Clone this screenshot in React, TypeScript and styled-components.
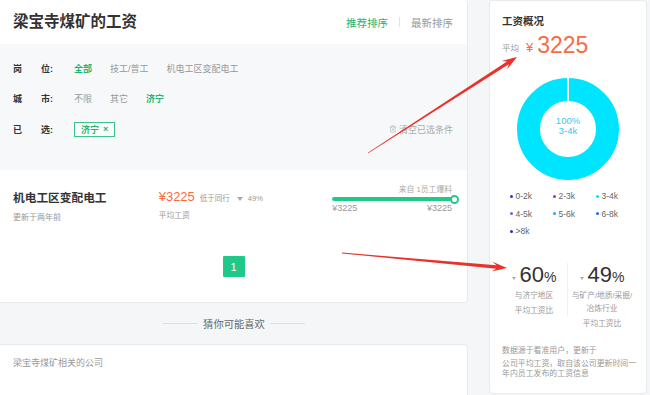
import React from "react";
import styled, { createGlobalStyle } from "styled-components";
import { Trash2 } from "lucide-react";

const GREEN = "#22b573";
const GREEN_BG = "#20c98a";
const ORANGE = "#fb6a3f";

const GlobalStyle = createGlobalStyle`
  html, body { margin: 0; padding: 0; background: #f5f6f8; }
  body { font-family: "Liberation Sans", "Noto Sans CJK SC", sans-serif; color: #333; }
  * { box-sizing: border-box; }
`;

const Page = styled.div`
  position: relative;
  width: 650px;
  height: 395px;
  overflow: hidden;
  display: flex;
  align-items: flex-start;
  gap: 21px;
`;

const Main = styled.div`
  width: 468px;
  flex: none;
  display: flex;
  flex-direction: column;
`;

const Card = styled.section`
  background: #fff;
  border: 1px solid #e8eaed;
  border-left: none;
  border-top: none;
  border-radius: 0 4px 4px 0;
`;

const Header = styled.header`
  height: 44px;
  display: flex;
  align-items: center;
  justify-content: space-between;
  padding: 0 14px 0 13px;
`;

const Title = styled.h1`
  margin: 0;
  font-size: 15.5px;
  font-weight: 700;
  color: #333;
  line-height: 20px;
`;

const Sorts = styled.nav`
  display: flex;
  align-items: center;
  gap: 11px;
  font-size: 10.5px;
`;

const SortLink = styled.span<{ $active?: boolean }>`
  color: ${(p) => (p.$active ? GREEN : "#999")};
`;

const Sep = styled.i`
  width: 1px;
  height: 10px;
  background: #e2e2e2;
`;

const Filter = styled.div`
  background: #f7f8fa;
  height: 126px;
  padding: 9px 14px 0 13px;
`;

const FilterRow = styled.div`
  display: flex;
  align-items: center;
  height: 30.5px;
  font-size: 9px;
`;

const Label = styled.div`
  width: 40px;
  margin-right: 21px;
  display: flex;
  justify-content: space-between;
  font-weight: 700;
  color: #333;
`;

const Options = styled.div`
  display: flex;
  gap: 18px;
`;

const Option = styled.span<{ $active?: boolean }>`
  color: ${(p) => (p.$active ? GREEN : "#999")};
  font-weight: ${(p) => (p.$active ? 700 : 400)};
`;

const Tag = styled.span`
  display: inline-flex;
  align-items: center;
  gap: 4px;
  height: 15px;
  padding: 0 6px;
  border: 1px solid #3cc48d;
  background: #fff;
  color: ${GREEN};
  font-weight: 700;
  font-size: 9px;
`;

const Clear = styled.span`
  margin-left: auto;
  display: flex;
  align-items: center;
  gap: 2px;
  color: #aaa;
  font-size: 9px;
`;

const JobRow = styled.div`
  display: flex;
  height: 86px;
  padding: 15px 8px 0 13px;
`;

const JobMain = styled.div`
  width: 146px;
  padding-top: 6px;
`;

const JobTitle = styled.div`
  font-size: 11.7px;
  line-height: 14px;
  font-weight: 700;
  color: #333;
`;

const Muted = styled.div<{ $size?: number; $gap?: number }>`
  margin-top: ${(p) => p.$gap ?? 0}px;
  font-size: ${(p) => p.$size ?? 8}px;
  line-height: 10px;
  color: #999;
`;

const SalaryCol = styled.div`
  width: 174px;
  padding-top: 5px;
`;

const PriceLine = styled.div`
  display: flex;
  align-items: baseline;
  line-height: 14px;
`;

const Price = styled.span`
  font-size: 13px;
  color: ${ORANGE};
`;

const Compare = styled.span<{ $gap?: number }>`
  font-size: 7.5px;
  color: #999;
  margin-left: ${(p) => p.$gap ?? 0}px;
`;

const DownTri = styled.i`
  display: inline-block;
  width: 0;
  height: 0;
  border-left: 3px solid transparent;
  border-right: 3px solid transparent;
  border-top: 4px solid #aaa;
  margin: 0 5px 1px 7px;
`;

const RangeCol = styled.div`
  width: 127px;
  display: flex;
  flex-direction: column;
`;

const Source = styled.div`
  text-align: right;
  padding-right: 7px;
  font-size: 7.8px;
  line-height: 10px;
  color: #aaa;
`;

const Track = styled.div`
  position: relative;
  height: 8px;
  display: flex;
  align-items: center;
`;

const Bar = styled.div`
  flex: 1;
  height: 4px;
  margin-right: 4px;
  border-radius: 2px;
  background: ${GREEN_BG};
`;

const Knob = styled.span`
  position: absolute;
  right: 0;
  top: -0.5px;
  width: 9px;
  height: 9px;
  border-radius: 50%;
  border: 2px solid ${GREEN_BG};
  background: #fff;
`;

const RangeLabels = styled.div`
  display: flex;
  justify-content: space-between;
  padding-right: 7px;
  font-size: 9px;
  line-height: 10px;
  color: #999;
`;

const Pager = styled.div`
  display: flex;
  justify-content: center;
  padding-bottom: 25px;
`;

const PageBtn = styled.span`
  width: 22px;
  height: 21px;
  display: flex;
  align-items: center;
  justify-content: center;
  background: ${GREEN_BG};
  color: #fff;
  font-size: 11px;
  border-radius: 1px;
`;

const RecTitle = styled.div`
  height: 41px;
  display: flex;
  align-items: center;
  justify-content: center;
  gap: 5px;
  font-size: 10.3px;
  color: #666;
`;

const RecLine = styled.i`
  width: 35px;
  height: 1px;
  background: #dedfe2;
`;

const Card2 = styled.section`
  background: #fff;
  border: 1px solid #e8eaed;
  border-left: none;
  border-radius: 0 4px 0 0;
  padding: 12px 13px;
  height: 60px;
  font-size: 9px;
  line-height: 12px;
  color: #999;
`;

const Side = styled.aside`
  width: 158px;
  height: 394px;
  flex: none;
  background: #fff;
  border: 1px solid #e8eaed;
  border-radius: 4px;
  padding: 13px 10px 0 12px;
  display: flex;
  flex-direction: column;
`;

const SideTitle = styled.div`
  font-size: 10.5px;
  font-weight: 700;
  line-height: 14px;
  color: #333;
`;

const AvgRow = styled.div`
  margin-top: 7px;
  display: flex;
  align-items: center;
  height: 26px;
`;

const AvgLabel = styled.span`
  font-size: 8.5px;
  line-height: 10px;
  color: #999;
  margin-right: 7px;
`;

const Yen = styled.span`
  font-size: 13px;
  line-height: 14px;
  color: ${ORANGE};
  margin-right: 4px;
`;

const AvgValue = styled.span`
  font-size: 23px;
  line-height: 24px;
  margin-bottom: 7px;
  color: ${ORANGE};
`;

const DonutWrap = styled.div`
  display: flex;
  justify-content: center;
  margin: 16px 1px 0 -1px;
`;

const Legend = styled.div`
  margin-top: 9px;
  padding-left: 7.5px;
  display: grid;
  grid-template-columns: repeat(3, 43px);
  row-gap: 5.5px;
`;

const LegendItem = styled.div`
  display: flex;
  align-items: center;
  gap: 3px;
  font-size: 8.5px;
  line-height: 12px;
  color: #666;
`;

const Dot = styled.i<{ $c: string }>`
  width: 3px;
  height: 3px;
  border-radius: 50%;
  background: ${(p) => p.$c};
`;

const Stats = styled.div`
  margin: 26px 0 0 -1px;
  display: flex;
  align-items: flex-start;
`;

const StatCol = styled.div<{ $w: number }>`
  width: ${(p) => p.$w}px;
  text-align: center;
`;

const StatDivider = styled.i`
  width: 1px;
  height: 53px;
  background: #eeeff1;
`;

const StatValue = styled.div`
  font-size: 22px;
  line-height: 24px;
  color: #333;
`;

const Pct = styled.span`
  font-size: 14px;
`;

const StatTri = styled.i`
  display: inline-block;
  width: 0;
  height: 0;
  border-left: 2.5px solid transparent;
  border-right: 2.5px solid transparent;
  border-top: 3px solid #aaa;
  margin: 0 4px 2px 0;
`;

const StatDesc = styled.div<{ $gap?: number }>`
  margin-top: ${(p) => p.$gap ?? 1}px;
  font-size: 7.7px;
  line-height: 12.5px;
  color: #999;
`;

const Note = styled.p<{ $gap: number; $lh: number }>`
  margin: ${(p) => p.$gap}px 0 0;
  font-size: 7.9px;
  line-height: ${(p) => p.$lh}px;
  color: #999;
  white-space: nowrap;
`;

const Overlay = styled.svg`
  position: absolute;
  left: 0;
  top: 0;
  pointer-events: none;
`;

function arrowPoints(x1: number, y1: number, x2: number, y2: number) {
  const dx = x2 - x1;
  const dy = y2 - y1;
  const len = Math.hypot(dx, dy);
  const ux = dx / len;
  const uy = dy / len;
  const nx = -uy;
  const ny = ux;
  const headL = 15;
  const headW = 10;
  const tailW = 0.4;
  const shaftW = 1.7;
  const bx = x2 - ux * headL;
  const by = y2 - uy * headL;
  const sx = x2 - ux * headL * 0.72;
  const sy = y2 - uy * headL * 0.72;
  const pts: [number, number][] = [
    [x1 + nx * tailW, y1 + ny * tailW],
    [sx + nx * shaftW, sy + ny * shaftW],
    [bx + (nx * headW) / 2, by + (ny * headW) / 2],
    [x2, y2],
    [bx - (nx * headW) / 2, by - (ny * headW) / 2],
    [sx - nx * shaftW, sy - ny * shaftW],
    [x1 - nx * tailW, y1 - ny * tailW],
  ];
  return pts.map((p) => `${p[0].toFixed(1)},${p[1].toFixed(1)}`).join(" ");
}

const legend = [
  { label: "0-2k", c: "#2b35c9" },
  { label: "2-3k", c: "#9a2fd6" },
  { label: "3-4k", c: "#00e1ff" },
  { label: "4-5k", c: "#6f5cf0" },
  { label: "5-6k", c: "#2aa4f4" },
  { label: "6-8k", c: "#1670f0" },
  { label: ">8k", c: "#2331c0" },
];

export default function App() {
  return (
    <>
      <GlobalStyle />
      <Page>
        <Main>
          <Card>
            <Header>
              <Title>梁宝寺煤矿的工资</Title>
              <Sorts>
                <SortLink $active>推荐排序</SortLink>
                <Sep />
                <SortLink>最新排序</SortLink>
              </Sorts>
            </Header>
            <Filter>
              <FilterRow>
                <Label>
                  <span>岗</span>
                  <span>位:</span>
                </Label>
                <Options>
                  <Option $active>全部</Option>
                  <Option>技工/普工</Option>
                  <Option>机电工区变配电工</Option>
                </Options>
              </FilterRow>
              <FilterRow>
                <Label>
                  <span>城</span>
                  <span>市:</span>
                </Label>
                <Options>
                  <Option>不限</Option>
                  <Option>其它</Option>
                  <Option $active>济宁</Option>
                </Options>
              </FilterRow>
              <FilterRow>
                <Label>
                  <span>已</span>
                  <span>选:</span>
                </Label>
                <Tag>
                  济宁<span>×</span>
                </Tag>
                <Clear>
                  <Trash2 size={8} strokeWidth={1.5} />
                  清空已选条件
                </Clear>
              </FilterRow>
            </Filter>
            <JobRow>
              <JobMain>
                <JobTitle>机电工区变配电工</JobTitle>
                <Muted $gap={8}>更新于两年前</Muted>
              </JobMain>
              <SalaryCol>
                <PriceLine>
                  <Price>¥3225</Price>
                  <Compare $gap={5}>低于同行</Compare>
                  <DownTri />
                  <Compare>49%</Compare>
                </PriceLine>
                <Muted $size={7.75} $gap={5}>
                  平均工资
                </Muted>
              </SalaryCol>
              <RangeCol>
                <Source>来自 1员工爆料</Source>
                <Track>
                  <Bar />
                  <Knob />
                </Track>
                <RangeLabels>
                  <span>¥3225</span>
                  <span>¥3225</span>
                </RangeLabels>
              </RangeCol>
            </JobRow>
            <Pager>
              <PageBtn>1</PageBtn>
            </Pager>
          </Card>
          <RecTitle>
            <RecLine />
            猜你可能喜欢
            <RecLine />
          </RecTitle>
          <Card2>梁宝寺煤矿相关的公司</Card2>
        </Main>
        <Side>
          <SideTitle>工资概况</SideTitle>
          <AvgRow>
            <AvgLabel>平均</AvgLabel>
            <Yen>¥</Yen>
            <AvgValue>3225</AvgValue>
          </AvgRow>
          <DonutWrap>
            <svg width="104" height="104" viewBox="0 0 104 104">
              <circle cx="52" cy="52" r="39.5" fill="none" stroke="#00e5ff" strokeWidth="23" />
              <rect x="51" y="0" width="2" height="25" fill="#fff" />
              <text x="52" y="47" textAnchor="middle" fontSize="9.5" fill="#3cc6f0" fontFamily="Liberation Sans, sans-serif">
                100%
              </text>
              <text x="52" y="57" textAnchor="middle" fontSize="9.5" fill="#3cc6f0" fontFamily="Liberation Sans, sans-serif">
                3-4k
              </text>
            </svg>
          </DonutWrap>
          <Legend>
            {legend.map((l) => (
              <LegendItem key={l.label}>
                <Dot $c={l.c} />
                {l.label}
              </LegendItem>
            ))}
          </Legend>
          <Stats>
            <StatCol $w={66}>
              <StatValue>
                <StatTri />
                60<Pct>%</Pct>
              </StatValue>
              <StatDesc>与济宁地区</StatDesc>
              <StatDesc $gap={2.5}>平均工资比</StatDesc>
            </StatCol>
            <StatDivider />
            <StatCol $w={68}>
              <StatValue>
                <StatTri />
                49<Pct>%</Pct>
              </StatValue>
              <StatDesc>
                与矿产/地质/采掘/
                <br />
                冶炼行业
              </StatDesc>
              <StatDesc $gap={2.5}>平均工资比</StatDesc>
            </StatCol>
          </Stats>
          <Note $gap={14.5} $lh={11}>
            数据源于看准用户，更新于
          </Note>
          <Note $gap={3} $lh={10.5}>
            公司平均工资，取自该公司更新时间一
            <br />
            年内员工发布的工资信息
          </Note>
        </Side>
        <Overlay width="650" height="395" viewBox="0 0 650 395">
          <polygon points={arrowPoints(368, 153, 517, 57)} fill="#e8322b" />
          <polygon points={arrowPoints(342, 253, 507, 268)} fill="#e8322b" />
        </Overlay>
      </Page>
    </>
  );
}
